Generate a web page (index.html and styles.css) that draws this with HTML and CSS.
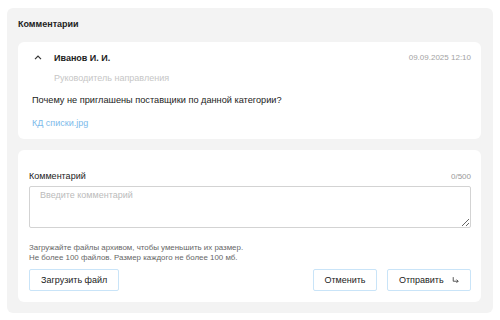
FILE: index.html
```html
<!DOCTYPE html>
<html lang="ru">
<head>
    <meta charset="UTF-8">
    <title>Комментарии</title>
    <link rel="stylesheet" href="styles.css">
</head>
<body>
    <div class="panel">
        <h2 class="panel-title">Комментарии</h2>

        <div class="card comment">
            <div class="comment-head">
                <svg class="chevron" width="8" height="5" viewBox="0 0 8 5">
                    <path d="M1 4.2 L4 1.2 L7 4.2" fill="none" stroke="#333" stroke-width="1.2"/>
                </svg>
                <span class="author">Иванов И. И.</span>
                <span class="date">09.09.2025 12:10</span>
            </div>
            <div class="role">Руководитель направления</div>
            <p class="comment-text">Почему не приглашены поставщики по данной категории?</p>
            <a href="#" class="attachment">КД списки.jpg</a>
        </div>

        <div class="card form">
            <div class="form-label">
                <span>Комментарий</span>
                <span class="counter">0/500</span>
            </div>
            <textarea class="input" placeholder="Введите комментарий"></textarea>
            <p class="hint">Загружайте файлы архивом, чтобы уменьшить их размер.<br>Не более 100 файлов. Размер каждого не более 100 мб.</p>
            <div class="actions">
                <button class="btn">Загрузить файл</button>
                <div class="actions-right">
                    <button class="btn btn-cancel">Отменить</button>
                    <button class="btn btn-send">Отправить
                        <svg width="9" height="8" viewBox="0 0 9 8">
                            <path d="M1.5 0.5 V5.5 H7.5 M5.5 3.5 L7.5 5.5 L5.5 7.5" fill="none" stroke="#333" stroke-width="1"/>
                        </svg>
                    </button>
                </div>
            </div>
        </div>
    </div>
</body>
</html>
```

FILE: styles.css
```css
body {
    font-family: 'Liberation Sans', Arial, sans-serif;
    background: #fff;
    color: #222;
    margin: 0;
    padding: 8px 7px;
}
.panel {
    width: 486px;
    box-sizing: border-box;
    background: #f3f3f3;
    border-radius: 6px;
    padding: 11px 12px 11px 11px;
}
.panel-title {
    font-size: 9px;
    font-weight: bold;
    margin: 0 0 12px;
    line-height: 11px;
}
.card {
    background: #fff;
    border-radius: 6px;
}
.comment {
    height: 97px;
    box-sizing: border-box;
    padding: 10px 10px 0 14px;
    margin-bottom: 11px;
}
.comment-head {
    display: flex;
    align-items: center;
    height: 11px;
}
.chevron {
    margin: 0 12px 0 2px;
}
.author {
    font-size: 9px;
    font-weight: bold;
}
.date {
    margin-left: auto;
    font-size: 8px;
    color: #a3a3a3;
}
.role {
    font-size: 9px;
    color: #c6c6c6;
    margin: 10px 0 0 22px;
    line-height: 11px;
}
.comment-text {
    font-size: 9.2px;
    line-height: 11px;
    margin: 11px 0 0;
}
.attachment {
    display: inline-block;
    margin-top: 12px;
    font-size: 9px;
    line-height: 11px;
    color: #7cbaea;
    text-decoration: none;
}
.form {
    padding: 21px 10px 11px 11px;
}
.form-label {
    display: flex;
    justify-content: space-between;
    align-items: baseline;
    font-size: 9px;
    line-height: 11px;
    margin-bottom: 4px;
}
.counter {
    font-size: 8px;
    color: #999;
}
.input {
    display: block;
    width: 100%;
    height: 42px;
    box-sizing: border-box;
    border: 1px solid #d3d3d3;
    border-radius: 2px;
    padding: 3px 10px;
    font-family: inherit;
    font-size: 9px;
    margin: 0;
}
.input::placeholder {
    color: #bbb;
}
.hint {
    font-size: 7.9px;
    line-height: 10px;
    color: #666;
    margin: 15px 0 6px;
}
.actions {
    display: flex;
    justify-content: space-between;
}
.actions-right {
    display: flex;
    gap: 10px;
}
.btn {
    height: 22px;
    padding: 0 11px;
    background: #fff;
    border: 1px solid #c9e4f8;
    border-radius: 2px;
    font-family: inherit;
    font-size: 9px;
    color: #222;
    display: flex;
    align-items: center;
    gap: 8px;
}
.btn-cancel {
    width: 64px;
    justify-content: center;
}
.btn-send {
    width: 84px;
    justify-content: center;
}
```
